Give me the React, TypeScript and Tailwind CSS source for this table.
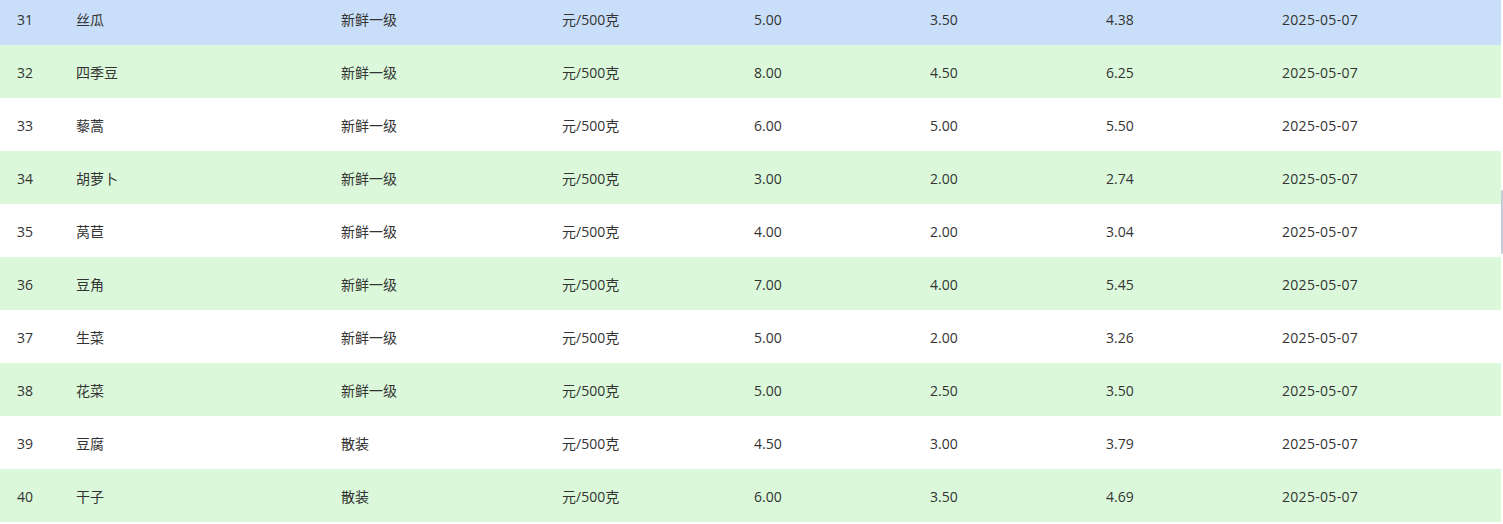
import React from "react";

type Row = {
  id: number;
  name: string;
  grade: string;
  unit: string;
  high: string;
  low: string;
  avg: string;
  date: string;
};

const rows: Row[] = [
  { id: 31, name: "丝瓜", grade: "新鲜一级", unit: "元/500克", high: "5.00", low: "3.50", avg: "4.38", date: "2025-05-07" },
  { id: 32, name: "四季豆", grade: "新鲜一级", unit: "元/500克", high: "8.00", low: "4.50", avg: "6.25", date: "2025-05-07" },
  { id: 33, name: "藜蒿", grade: "新鲜一级", unit: "元/500克", high: "6.00", low: "5.00", avg: "5.50", date: "2025-05-07" },
  { id: 34, name: "胡萝卜", grade: "新鲜一级", unit: "元/500克", high: "3.00", low: "2.00", avg: "2.74", date: "2025-05-07" },
  { id: 35, name: "莴苣", grade: "新鲜一级", unit: "元/500克", high: "4.00", low: "2.00", avg: "3.04", date: "2025-05-07" },
  { id: 36, name: "豆角", grade: "新鲜一级", unit: "元/500克", high: "7.00", low: "4.00", avg: "5.45", date: "2025-05-07" },
  { id: 37, name: "生菜", grade: "新鲜一级", unit: "元/500克", high: "5.00", low: "2.00", avg: "3.26", date: "2025-05-07" },
  { id: 38, name: "花菜", grade: "新鲜一级", unit: "元/500克", high: "5.00", low: "2.50", avg: "3.50", date: "2025-05-07" },
  { id: 39, name: "豆腐", grade: "散装", unit: "元/500克", high: "4.50", low: "3.00", avg: "3.79", date: "2025-05-07" },
  { id: 40, name: "干子", grade: "散装", unit: "元/500克", high: "6.00", low: "3.50", avg: "4.69", date: "2025-05-07" },
];

export default function App() {
  return (
    <div
      className="relative w-[1503px] h-[524px] overflow-hidden bg-white text-[14px] text-[#333333]"
      style={{ fontFamily: '"Open Sans", "Noto Sans CJK SC", sans-serif' }}
    >
      {/* table body, scrolled so the first row is partly hidden */}
      <div className="w-[1501px] -mt-[8px]">
        {rows.map((r, i) => (
          <div
            key={r.id}
            className={
              "grid grid-cols-[59px_265px_221px_192px_176px_176px_176px_1fr] items-center h-[53px] pl-[17px] pt-[1px] " +
              (i === 0 ? "bg-[#c9dff9]" : i % 2 === 1 ? "bg-[#dbf9da]" : "bg-white")
            }
          >
            <div>{r.id}</div>
            <div>{r.name}</div>
            <div>{r.grade}</div>
            <div>{r.unit}</div>
            <div>{r.high}</div>
            <div>{r.low}</div>
            <div>{r.avg}</div>
            <div className="tracking-[0.3px]">{r.date}</div>
          </div>
        ))}
      </div>

      {/* scrollbar thumb */}
      <div className="absolute right-0 top-[190px] w-[2px] h-[64px] rounded-sm bg-[#c6cbd8]" />
    </div>
  );
}
